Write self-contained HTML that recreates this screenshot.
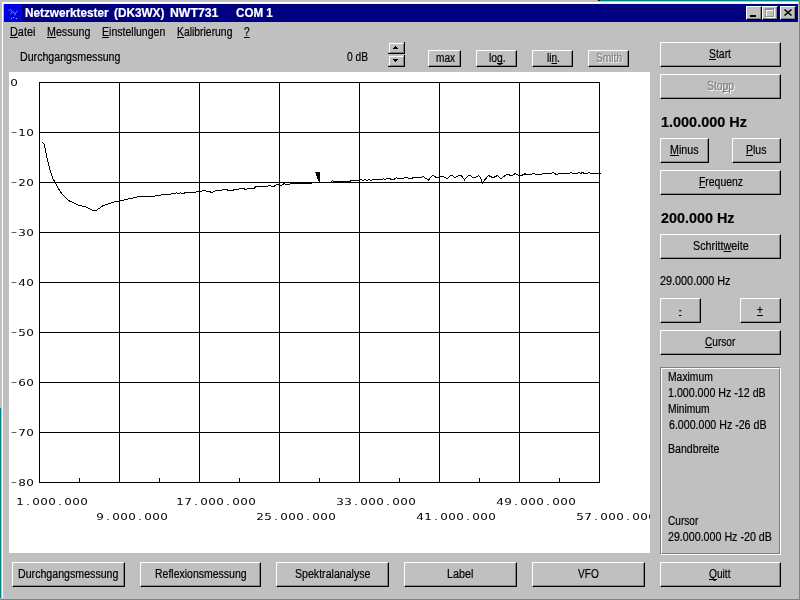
<!DOCTYPE html><html><head><meta charset="utf-8"><title>Netzwerktester (DK3WX) NWT731 COM 1</title><style>
html,body{margin:0;padding:0}
body{width:800px;height:600px;overflow:hidden;background:#c0c0c0;position:relative;font-family:"Liberation Sans",sans-serif;font-size:12px;line-height:14px;color:#000}
.a{position:absolute}
.t{position:absolute;white-space:nowrap;transform-origin:0 0;height:14px;-webkit-text-stroke:0.2px currentColor}
.t u{text-decoration:underline;text-decoration-skip-ink:none;text-underline-offset:1px;text-decoration-thickness:1px}
.b{font-weight:bold}
.w{color:#fff}
.big{font-weight:bold;font-size:14px;line-height:16px;height:16px}
.dis{color:#808080;text-shadow:1px 1px 0 #fff}
.btn{position:absolute;box-sizing:border-box;border-top:1px solid #fff;border-left:1px solid #fff;border-right:1px solid #000;border-bottom:1px solid #000;background:#c0c0c0;box-shadow:inset -1px -1px 0 #868686}
</style></head><body>
<div class="a" style="left:600px;top:0;width:200px;height:1px;background:#008080"></div><div class="a" style="left:598px;top:0;width:2px;height:1px;background:#000"></div>
<div class="a" style="left:0;top:408px;width:1px;height:190px;background:#008080"></div>
<div class="a" style="left:2px;top:2px;width:796px;height:1px;background:#fff"></div><div class="a" style="left:3px;top:3px;width:795px;height:1px;background:#f4f4f8"></div>
<div class="a" style="left:2px;top:2px;width:1px;height:596px;background:#fff"></div>
<div class="a" style="left:0;top:599px;width:800px;height:1px;background:#808080"></div>
<div class="a" style="left:799px;top:0;width:1px;height:600px;background:#808080"></div>
<div class="a" style="left:4px;top:4px;width:794px;height:18px;background:#000080"></div>
<svg class="a" style="left:4px;top:4px" width="18" height="18" viewBox="0 0 18 18"><rect width="18" height="18" fill="#0000dc"/><path d="M4.5 6.5 C5.5 5 8 5.5 8 7.5 L6.5 10.5 M8.5 7 L11 10 L13.5 6.5 M11 10 V11.5" stroke="#7878e0" stroke-width="1" fill="none"/><rect x="7" y="14" width="1" height="1" fill="#b8b8f8"/><rect x="9" y="13" width="1" height="1" fill="#b8b8f8"/><rect x="12" y="14" width="1" height="1" fill="#b8b8f8"/></svg>
<div class="btn" style="left:746px;top:6px;width:16px;height:14px"></div>
<div class="btn" style="left:762px;top:6px;width:16px;height:14px"></div>
<div class="btn" style="left:780px;top:6px;width:16px;height:14px"></div>
<div class="a" style="left:750px;top:15px;width:6px;height:2px;background:#000"></div>
<div class="a" style="left:766px;top:9px;width:9px;height:9px;box-sizing:border-box;border:1px solid #fff;border-top:2px solid #fff"></div>
<div class="a" style="left:765px;top:8px;width:9px;height:9px;box-sizing:border-box;border:1px solid #909090;border-top:2px solid #909090"></div>
<svg class="a" style="left:780px;top:6px" width="16" height="14" viewBox="0 0 16 14"><path d="M4.5 3.5 L11.5 9.5 M11.5 3.5 L4.5 9.5" stroke="#000" stroke-width="1.6" fill="none"/></svg>
<svg class="a" style="left:0;top:0;will-change:transform" width="800" height="600" viewBox="0 0 800 600">
<rect x="9" y="72" width="641" height="481" fill="#fff"/>
<g fill="#000" shape-rendering="crispEdges">
<rect x="39" y="82" width="1" height="401"/>
<rect x="119" y="82" width="1" height="401"/>
<rect x="199" y="82" width="1" height="401"/>
<rect x="279" y="82" width="1" height="401"/>
<rect x="359" y="82" width="1" height="401"/>
<rect x="439" y="82" width="1" height="401"/>
<rect x="519" y="82" width="1" height="401"/>
<rect x="599" y="82" width="1" height="401"/>
<rect x="39" y="82" width="561" height="1"/>
<rect x="39" y="132" width="561" height="1"/>
<rect x="39" y="182" width="561" height="1"/>
<rect x="39" y="232" width="561" height="1"/>
<rect x="39" y="282" width="561" height="1"/>
<rect x="39" y="332" width="561" height="1"/>
<rect x="39" y="382" width="561" height="1"/>
<rect x="39" y="432" width="561" height="1"/>
<rect x="39" y="482" width="561" height="1"/>
<rect x="79" y="478" width="1" height="4"/>
<rect x="159" y="478" width="1" height="4"/>
<rect x="239" y="478" width="1" height="4"/>
<rect x="319" y="478" width="1" height="4"/>
<rect x="399" y="478" width="1" height="4"/>
<rect x="479" y="478" width="1" height="4"/>
<rect x="559" y="478" width="1" height="4"/>
</g>
<polyline points="42.0,141.9 44.0,144.3 45.3,149.0 46.7,156.3 48.7,165.0 50.7,172.3 52.7,178.3 55.3,182.7 58.7,189.0 62.0,193.9 65.3,197.0 68.7,200.6 74.0,203.0 78.7,205.2 85.3,206.7 89.3,208.6 92.7,210.3 96.0,210.6 99.3,208.3 102.7,205.9 107.3,204.3 112.0,202.7 114.7,201.7 120.0,201.1 127.0,199.3 138.0,196.8 153.0,196.3 160.0,195.1 170.0,194.3 176.5,192.8 178.5,193.5 180.5,192.7 183.0,193.8 185.0,192.7 194.0,192.3 199.0,191.5 203.0,190.8 208.0,191.1 210.0,191.8 212.0,192.5 214.0,191.3 220.0,190.1 227.0,189.8 229.0,190.8 232.0,190.3 240.0,188.8 244.0,188.5 245.0,189.5 248.0,188.8 254.0,188.3 256.0,186.5 268.0,186.1 270.0,185.5 273.5,186.8 277.0,184.3 279.0,184.3 281.0,185.5 284.0,183.8 287.0,184.3 292.0,183.8 312.0,183.8" fill="none" stroke="#000" stroke-width="1" shape-rendering="crispEdges"/>
<polyline points="331.0,182.3 332.5,180.6 334.0,181.7 350.0,181.8 350.5,180.8 359.0,180.6 361.0,179.3 363.0,180.8 365.0,179.5 367.0,180.8 369.0,179.5 371.0,180.8 373.0,179.6 382.0,179.5 383.5,178.5 385.0,179.6 387.0,178.5 390.0,178.5 391.0,179.5 394.0,179.3 396.5,177.6 399.0,178.8 403.0,178.8 404.5,177.6 407.5,177.6 409.0,178.8 411.5,178.8 413.0,177.6 421.5,177.6 423.0,176.5 425.0,177.8 428.5,180.1 432.5,175.3 436.0,177.3 439.0,177.6 440.0,176.6 443.5,176.6 447.0,178.8 450.5,175.5 452.5,175.8 455.0,177.8 458.5,175.5 461.5,175.8 464.5,179.8 468.5,175.3 470.5,175.6 472.5,177.8 475.5,177.5 478.5,175.5 480.5,177.8 482.5,183.3 484.5,180.3 488.5,175.5 493.0,177.8 497.5,175.5 501.0,178.8 506.5,174.6 509.0,174.8 511.5,175.8 515.5,173.5 519.0,175.8 522.0,175.3 525.0,173.8 527.5,174.8 531.0,174.8 533.0,173.6 535.0,173.8 536.5,174.8 541.0,174.8 542.5,173.6 551.5,173.6 553.0,172.5 555.0,173.6 557.0,175.0 558.5,173.8 569.5,173.6 571.0,172.5 572.5,173.6 577.0,173.6 579.0,172.5 580.5,173.6 582.5,172.5 584.5,173.6 587.5,173.6 589.0,172.5 590.5,173.6 600.0,173.8 601.0,173.8" fill="none" stroke="#000" stroke-width="1" shape-rendering="crispEdges"/>
<polygon points="315,172 320,172 320,182.5 319,182.5" fill="#000" shape-rendering="crispEdges"/>
<g font-family="'DejaVu Sans','Liberation Sans',sans-serif" font-size="9.0" fill="#000">
<text transform="translate(10,86) scale(1.33,1)" x="0.15" dy="0.00">0</text>
<text transform="translate(10,136) scale(1.33,1)" x="0.76 6.16 12.18" dy="-0.90 0.90 0.00">–10</text>
<text transform="translate(10,186) scale(1.33,1)" x="0.76 6.16 12.18" dy="-0.90 0.90 0.00">–20</text>
<text transform="translate(10,236) scale(1.33,1)" x="0.76 6.16 12.18" dy="-0.90 0.90 0.00">–30</text>
<text transform="translate(10,286) scale(1.33,1)" x="0.76 6.16 12.18" dy="-0.90 0.90 0.00">–40</text>
<text transform="translate(10,336) scale(1.33,1)" x="0.76 6.16 12.18" dy="-0.90 0.90 0.00">–50</text>
<text transform="translate(10,386) scale(1.33,1)" x="0.76 6.16 12.18" dy="-0.90 0.90 0.00">–60</text>
<text transform="translate(10,436) scale(1.33,1)" x="0.76 6.16 12.18" dy="-0.90 0.90 0.00">–70</text>
<text transform="translate(10,486) scale(1.33,1)" x="0.76 6.16 12.18" dy="-0.90 0.90 0.00">–80</text>
<text transform="translate(16,505) scale(1.33,1)" x="0.15 7.59 12.18 18.19 24.21 31.65 36.24 42.25 48.27" dy="0.00 0.00 0.00 0.00 0.00 0.00 0.00 0.00 0.00">1.000.000</text>
<text transform="translate(176,505) scale(1.33,1)" x="0.15 6.16 13.61 18.19 24.21 30.22 37.67 42.25 48.27 54.28" dy="0.00 0.00 0.00 0.00 0.00 0.00 0.00 0.00 0.00 0.00">17.000.000</text>
<text transform="translate(336,505) scale(1.33,1)" x="0.15 6.16 13.61 18.19 24.21 30.22 37.67 42.25 48.27 54.28" dy="0.00 0.00 0.00 0.00 0.00 0.00 0.00 0.00 0.00 0.00">33.000.000</text>
<text transform="translate(496,505) scale(1.33,1)" x="0.15 6.16 13.61 18.19 24.21 30.22 37.67 42.25 48.27 54.28" dy="0.00 0.00 0.00 0.00 0.00 0.00 0.00 0.00 0.00 0.00">49.000.000</text>
<text transform="translate(96,520) scale(1.33,1)" x="0.15 7.59 12.18 18.19 24.21 31.65 36.24 42.25 48.27" dy="0.00 0.00 0.00 0.00 0.00 0.00 0.00 0.00 0.00">9.000.000</text>
<text transform="translate(256,520) scale(1.33,1)" x="0.15 6.16 13.61 18.19 24.21 30.22 37.67 42.25 48.27 54.28" dy="0.00 0.00 0.00 0.00 0.00 0.00 0.00 0.00 0.00 0.00">25.000.000</text>
<text transform="translate(416,520) scale(1.33,1)" x="0.15 6.16 13.61 18.19 24.21 30.22 37.67 42.25 48.27 54.28" dy="0.00 0.00 0.00 0.00 0.00 0.00 0.00 0.00 0.00 0.00">41.000.000</text>
<text transform="translate(576,520) scale(1.33,1)" x="0.15 6.16 13.61 18.19 24.21 30.22 37.67 42.25 48.27 54.28" dy="0.00 0.00 0.00 0.00 0.00 0.00 0.00 0.00 0.00 0.00">57.000.000</text>
</g>
<rect x="650" y="490" width="10" height="40" fill="#c0c0c0"/>
</svg>
<div class="a" style="left:660px;top:367px;width:121px;height:188px;box-sizing:border-box;border:1px solid #808080;border-right-color:#fff;border-bottom-color:#fff"></div>
<div class="a" style="left:661px;top:368px;width:119px;height:186px;box-sizing:border-box;border:1px solid #fff;border-right-color:#808080;border-bottom-color:#808080"></div>
<div class="btn" style="left:660px;top:42px;width:121px;height:25px"></div>
<div class="btn" style="left:660px;top:74px;width:121px;height:25px"></div>
<div class="btn" style="left:660px;top:138px;width:49px;height:25px"></div>
<div class="btn" style="left:732px;top:138px;width:49px;height:25px"></div>
<div class="btn" style="left:660px;top:170px;width:121px;height:25px"></div>
<div class="btn" style="left:660px;top:234px;width:121px;height:25px"></div>
<div class="btn" style="left:660px;top:298px;width:41px;height:25px"></div>
<div class="btn" style="left:740px;top:298px;width:41px;height:25px"></div>
<div class="btn" style="left:660px;top:330px;width:121px;height:25px"></div>
<div class="btn" style="left:660px;top:562px;width:121px;height:25px"></div>
<div class="btn" style="left:12px;top:562px;width:113px;height:25px"></div>
<div class="btn" style="left:140px;top:562px;width:121px;height:25px"></div>
<div class="btn" style="left:276px;top:562px;width:113px;height:25px"></div>
<div class="btn" style="left:404px;top:562px;width:113px;height:25px"></div>
<div class="btn" style="left:532px;top:562px;width:113px;height:25px"></div>
<div class="btn" style="left:428px;top:50px;width:33px;height:17px"></div>
<div class="btn" style="left:476px;top:50px;width:41px;height:17px"></div>
<div class="btn" style="left:532px;top:50px;width:41px;height:17px"></div>
<div class="btn" style="left:588px;top:50px;width:41px;height:17px"></div>
<div class="a" style="left:388px;top:42px;width:17px;height:12px;box-sizing:border-box;border-right:1px solid #000;border-bottom:1px solid #000"></div>
<div class="a" style="left:389px;top:43px;width:15px;height:10px;box-sizing:border-box;border-top:1px solid #fff;border-left:1px solid #fff;border-right:1px solid #808080;border-bottom:1px solid #808080"></div>
<div class="a" style="left:388px;top:55px;width:17px;height:12px;box-sizing:border-box;border-right:1px solid #000;border-bottom:1px solid #000"></div>
<div class="a" style="left:389px;top:56px;width:15px;height:10px;box-sizing:border-box;border-top:1px solid #fff;border-left:1px solid #fff;border-right:1px solid #808080;border-bottom:1px solid #808080"></div>
<svg class="a" style="left:388px;top:42px" width="17" height="25" viewBox="388 42 17 25" shape-rendering="crispEdges"><path d="M395 46h1v1h1v1h1v1h-5v-1h1v-1h1z M393 59h5v1h-1v1h-1v1h-1v-1h-1v-1h-1z" fill="#000"/></svg>
<div class="t b w" id="t0" style="left:24.85px;top:5.84px;transform:scaleX(0.9797)">Netzwerktester</div>
<div class="t b w" id="t1" style="left:114.40px;top:5.84px;transform:scaleX(0.9804)">(DK3WX)</div>
<div class="t b w" id="t2" style="left:169.77px;top:5.84px;transform:scaleX(1.0212)">NWT731</div>
<div class="t b w" id="t3" style="left:235.64px;top:5.84px;transform:scaleX(0.9670)">COM 1</div>
<div class="t " id="t4" style="left:10.10px;top:24.84px;transform:scaleX(0.9046)"><u>D</u>atei</div>
<div class="t " id="t5" style="left:47.13px;top:24.84px;transform:scaleX(0.8919)"><u>M</u>essung</div>
<div class="t " id="t6" style="left:102.16px;top:24.84px;transform:scaleX(0.8783)"><u>E</u>instellungen</div>
<div class="t " id="t7" style="left:177.20px;top:24.84px;transform:scaleX(0.8650)"><u>K</u>alibrierung</div>
<div class="t " id="t8" style="left:244.31px;top:24.84px;transform:scaleX(0.8400)"><u>?</u></div>
<div class="t " id="t9" style="left:20.13px;top:49.84px;transform:scaleX(0.8857)">Durchgangsmessung</div>
<div class="t " id="t10" style="left:346.57px;top:49.84px;transform:scaleX(0.8524)">0 dB</div>
<div class="t " id="t11" style="left:435.58px;top:50.84px;transform:scaleX(0.8400)">max</div>
<div class="t " id="t12" style="left:488.90px;top:50.84px;transform:scaleX(0.8591)">lo<u>g</u>.</div>
<div class="t " id="t13" style="left:546.60px;top:50.84px;transform:scaleX(0.8400)">li<u>n</u>.</div>
<div class="t dis" id="t14" style="left:595.90px;top:50.84px;transform:scaleX(0.8492)">Smith</div>
<div class="t " id="t15" style="left:709.22px;top:46.84px;transform:scaleX(0.8685)"><u>S</u>tart</div>
<div class="t dis" id="t16" style="left:706.87px;top:78.84px;transform:scaleX(0.8632)">Sto<u>p</u>p</div>
<div class="t big" id="t17" style="left:660.60px;top:114.15px;transform:scaleX(1.0315)">1.000.000 Hz</div>
<div class="t " id="t18" style="left:670.14px;top:142.84px;transform:scaleX(0.8903)"><u>M</u>inus</div>
<div class="t " id="t19" style="left:746.18px;top:142.84px;transform:scaleX(0.8771)"><u>P</u>lus</div>
<div class="t " id="t20" style="left:698.70px;top:174.84px;transform:scaleX(0.8669)"><u>F</u>requenz</div>
<div class="t big" id="t21" style="left:660.73px;top:210.15px;transform:scaleX(1.0266)">200.000 Hz</div>
<div class="t " id="t22" style="left:692.61px;top:238.84px;transform:scaleX(0.8977)">Schritt<u>w</u>eite</div>
<div class="t " id="t23" style="left:659.83px;top:273.84px;transform:scaleX(0.9026)">29.000.000 Hz</div>
<div class="t " id="t24" style="left:678.96px;top:302.84px;transform:scaleX(0.6000)"><u>-</u></div>
<div class="t " id="t25" style="left:757.23px;top:302.84px;transform:scaleX(0.8468)"><u>+</u></div>
<div class="t " id="t26" style="left:705.21px;top:334.84px;transform:scaleX(0.8400)"><u>C</u>ursor</div>
<div class="t " id="t27" style="left:668.21px;top:369.84px;transform:scaleX(0.8626)">Maximum</div>
<div class="t " id="t28" style="left:668.14px;top:385.84px;transform:scaleX(0.8876)">1.000.000 Hz -12 dB</div>
<div class="t " id="t29" style="left:668.22px;top:401.84px;transform:scaleX(0.8547)">Minimum</div>
<div class="t " id="t30" style="left:668.60px;top:417.84px;transform:scaleX(0.8855)">6.000.000 Hz -26 dB</div>
<div class="t " id="t31" style="left:668.14px;top:441.84px;transform:scaleX(0.8837)">Bandbreite</div>
<div class="t " id="t32" style="left:668.28px;top:513.84px;transform:scaleX(0.8400)">Cursor</div>
<div class="t " id="t33" style="left:667.88px;top:529.84px;transform:scaleX(0.8896)">29.000.000 Hz -20 dB</div>
<div class="t " id="t34" style="left:709.44px;top:566.84px;transform:scaleX(0.8470)"><u>Q</u>uitt</div>
<div class="t " id="t35" style="left:18.13px;top:566.84px;transform:scaleX(0.8857)">Durchgangsmessung</div>
<div class="t " id="t36" style="left:155.16px;top:566.84px;transform:scaleX(0.8746)">Reflexionsmessung</div>
<div class="t " id="t37" style="left:295.16px;top:566.84px;transform:scaleX(0.8837)">Spektralanalyse</div>
<div class="t " id="t38" style="left:447.12px;top:566.84px;transform:scaleX(0.8983)">Label</div>
<div class="t " id="t39" style="left:577.83px;top:566.84px;transform:scaleX(0.8400)">VFO</div>
</body></html>
